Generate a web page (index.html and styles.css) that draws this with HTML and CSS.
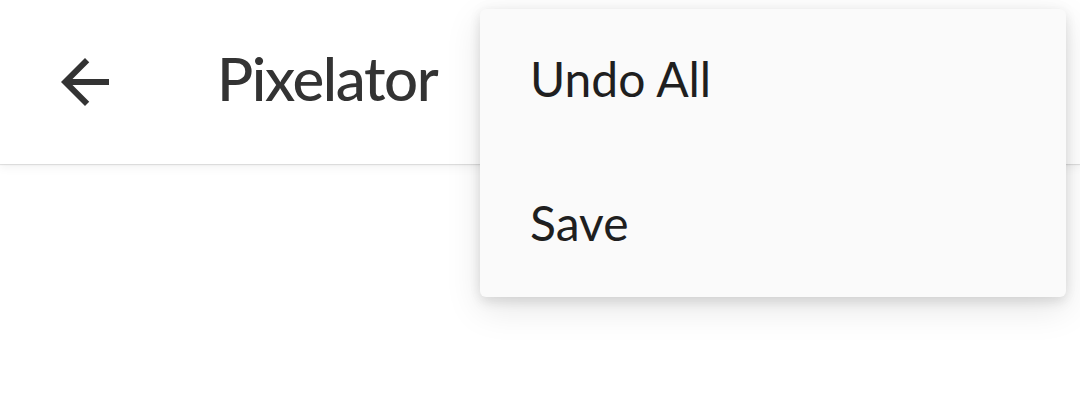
FILE: index.html
```html
<!DOCTYPE html>
<html>
<head>
<meta charset="utf-8">
<link rel="stylesheet" href="styles.css">
</head>
<body>
<div class="page">
  <header class="appbar">
    <button class="back" aria-label="Back">
      <svg viewBox="0 0 24 24" width="72" height="72"><path d="M20 11H7.83l5.59-5.59L12 4l-8 8 8 8 1.41-1.41L7.83 13H20v-2z" fill="#333333"/></svg>
    </button>
    <h1 class="title">Pixelator</h1>
  </header>
  <main class="content"></main>
  <ul class="menu">
    <li class="menu-item">Undo All</li>
    <li class="menu-item">Save</li>
  </ul>
</div>
</body>
</html>
```
FILE: styles.css
```css
html, body {
  margin: 0;
  padding: 0;
  background: #ffffff;
}
body {
  font-family: Lato, "Noto Sans", sans-serif;
  width: 1080px;
  height: 411px;
  overflow: hidden;
}
.page {
  position: relative;
  width: 1080px;
  height: 411px;
  background: #ffffff;
}
.appbar {
  height: 164px;
  display: flex;
  align-items: center;
  background: #ffffff;
  box-shadow: 0 1px 1px rgba(0,0,0,0.10), 0 3px 10px rgba(0,0,0,0.06);
  position: relative;
  z-index: 1;
}
.back {
  margin-left: 49px;
  margin-top: -1px;
  width: 72px;
  height: 72px;
  padding: 0;
  border: 0;
  background: none;
  display: flex;
}
.title {
  margin: 0 0 8px 96px;
  font-size: 60px;
  font-weight: 500;
  letter-spacing: -1.4px;
  color: #333333;
  line-height: 1;
}
.menu {
  position: absolute;
  left: 480px;
  top: 9px;
  width: 586px;
  margin: 0;
  padding: 0;
  list-style: none;
  background: #fafafa;
  border-radius: 6px;
  box-shadow: 0 6px 12px rgba(0,0,0,0.08), 0 12px 36px rgba(0,0,0,0.10), 0 0 14px rgba(0,0,0,0.05);
  z-index: 2;
}
.menu-item {
  height: 144px;
  box-sizing: border-box;
  display: flex;
  align-items: center;
  padding-left: 50px;
  padding-bottom: 6px;
  font-size: 48px;
  color: #1f1f1f;
}
```
